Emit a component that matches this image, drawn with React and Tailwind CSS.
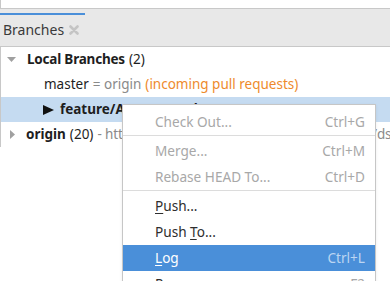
const menuItems = [
  { label: "Check Out...", shortcut: "Ctrl+G", disabled: true },
  { label: "Merge...", shortcut: "Ctrl+M", disabled: true, sepBefore: true },
  { label: "Rebase HEAD To...", shortcut: "Ctrl+D", disabled: true },
  { label: "Push...", u: "P", sepBefore: true },
  { label: "Push To...", u: "T" },
  { label: "Log", u: "L", shortcut: "Ctrl+L", active: true },
  { label: "Rename...", u: "R", shortcut: "F2" },
];

function Label({ text, u }) {
  if (!u) return text;
  const i = text.indexOf(u);
  return (
    <>
      {text.slice(0, i)}
      <span className="underline underline-offset-2">{u}</span>
      {text.slice(i + 1)}
    </>
  );
}

function ContextMenu() {
  return (
    <div className="absolute left-[122px] top-[104px] w-[254px] border border-[#c6c6c6] bg-white pt-[4px] shadow-[0_1px_3px_rgba(0,0,0,0.08)]">
      {menuItems.map((m, i) => (
        <div key={i}>
          {m.sepBefore && <div className="mb-[2px] h-px bg-[#dcdcdc]" />}
          <div
            className={[
              "flex h-[26px] items-center justify-between pl-[32px] pr-[10px] text-[13.6px]",
              m.active ? "bg-[#4a8fd9] text-white" : m.disabled ? "text-[#a8a8a8]" : "text-[#2e2e2e]",
            ].join(" ")}
          >
            <span>
              <Label text={m.label} u={m.u} />
            </span>
            {m.shortcut && (
              <span className={m.active ? "text-[#bcd6f2]" : "text-[#a8a8a8]"}>{m.shortcut}</span>
            )}
          </div>
        </div>
      ))}
    </div>
  );
}

export default function App() {
  return (
    <div
      className="relative h-[281px] w-[390px] overflow-hidden bg-white text-[#1e1e1e]"
      style={{ fontFamily: '"Noto Sans", "Open Sans", sans-serif' }}
    >
      <div className="h-[9px] border-b border-l border-[#c8c8c8] bg-white" />

      <div className="flex h-[38px] border-b border-[#c8c8c8] bg-[#e8e8e8]">
        <div className="flex w-[85px] shrink-0 flex-col">
          <div className="mt-[4px] h-[2px] bg-[#4a8fd9]" />
          <div className="flex flex-1 items-center gap-[5px] pl-[3px] pb-[3px] text-[14px] text-[#3a3a3a]">
            <span>Branches</span>
            <svg width="10" height="10" viewBox="0 0 10 10" className="mt-[1px] shrink-0">
              <path d="M1.5 1.5 L8.5 8.5 M8.5 1.5 L1.5 8.5" stroke="#c4c4c4" strokeWidth="2.6" strokeLinecap="round" />
            </svg>
          </div>
        </div>
        <div className="flex-1" />
        <svg width="10" height="16" viewBox="0 0 10 16" className="mr-[-8px] mt-[9px] shrink-0">
          <path d="M2 1 h5 v8 h-2 v2 h-2 v-2 h-1 z M2.5 12 h3 v3 h-3 z" fill="#2d4f8c" />
        </svg>
      </div>

      <div className="whitespace-nowrap border-l border-[#c8c8c8] text-[13.5px]">
        <div className="flex h-[25px] items-center">
          <svg width="10" height="6" viewBox="0 0 10 6" className="ml-[6px] mr-[10px] shrink-0">
            <path d="M0 0 H9 L4.5 5 Z" fill="#a0a0a0" />
          </svg>
          <span className="font-bold tracking-[-0.2px]">Local Branches</span>
          <span className="ml-[4px]">(2)</span>
        </div>
        <div className="flex h-[25px] items-center pl-[43px]">
          <span>master</span>
          <span className="ml-[4px] text-[#8a8a8a]">= origin</span>
          <span className="ml-[4px] text-[#ee8a2c]">(incoming pull requests)</span>
        </div>
        <div className="flex h-[25px] items-center bg-[#c5dbf1] pl-[42px]">
          <svg width="11" height="10" viewBox="0 0 11 10" className="shrink-0">
            <path d="M0 0 L11 5 L0 10 Z" fill="#111" />
          </svg>
          <span className="ml-[6px] font-bold">feature/AD-267_work</span>
        </div>
        <div className="flex h-[25px] items-center">
          <svg width="6" height="10" viewBox="0 0 6 10" className="ml-[9px] mr-[10px] shrink-0">
            <path d="M0 0 V9 L5 4.5 Z" fill="#a0a0a0" />
          </svg>
          <span className="shrink-0 font-bold">origin</span>
          <span className="ml-[4px] shrink-0">(20)</span>
          <span className="ml-[4px] shrink-0 tracking-[-0.1px] text-[#8a8a8a]">- https://github.com/example-team/projects/ds</span>
        </div>
      </div>

      <ContextMenu />
    </div>
  );
}
